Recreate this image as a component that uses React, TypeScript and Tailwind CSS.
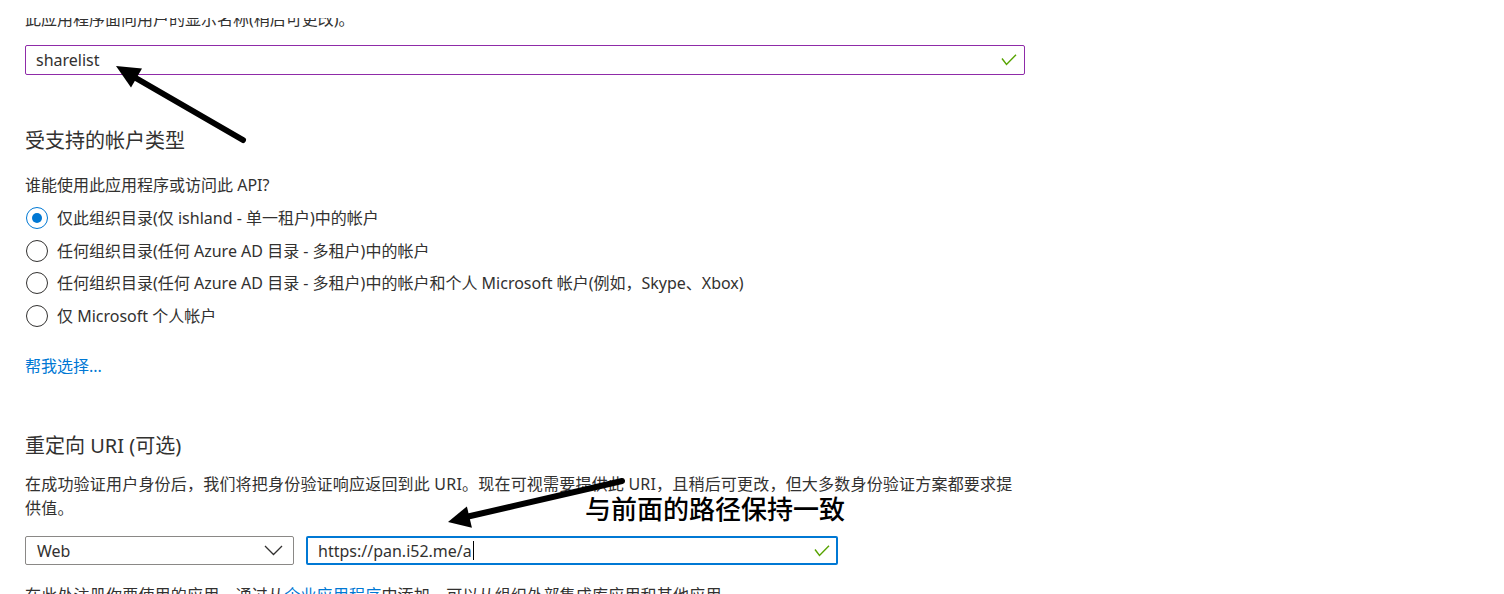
import React from "react";

function Check() {
  return (
    <svg width="16" height="12" viewBox="0 0 16 12" className="shrink-0">
      <path d="M1 4.5 L5.5 10.5 L15 0.8" fill="none" stroke="#57a300" strokeWidth="1.4" />
    </svg>
  );
}

function Radio({ checked, label }: { checked?: boolean; label: string }) {
  return (
    <div className="h-[32.5px] flex items-center">
      <span
        className={`w-[22px] h-[22px] ml-[1px] rounded-full border flex items-center justify-center shrink-0 ${
          checked ? "border-[#0078d4]" : "border-[#323130]"
        }`}
      >
        {checked && <span className="w-[10px] h-[10px] rounded-full bg-[#0078d4]" />}
      </span>
      <span className="ml-[9px] text-[16px] leading-[24px] whitespace-nowrap">{label}</span>
    </div>
  );
}

export default function App() {
  return (
    <div className="relative w-[1504px] h-[594px] overflow-hidden bg-white text-[#323130] font-['Noto_Sans','Noto_Sans_CJK_SC',sans-serif]">
      <div className="absolute top-0 left-0 w-full h-[18px] bg-white z-10" />
      <div className="pl-[25px] pt-[7px] w-[1025px]">
        <p className="text-[16px] leading-[24px] whitespace-nowrap">此应用程序面向用户的显示名称(稍后可更改)。</p>
        <div className="mt-[14px] h-[30px] border border-[#8f2ba8] rounded-[2px] flex items-center pl-[10px] pr-[7px]">
          <span className="flex-1 text-[16px] leading-[24px]">sharelist</span>
          <Check />
        </div>
        <h2 className="mt-[52px] text-[20px] leading-[28px]">受支持的帐户类型</h2>
        <p className="mt-[18px] text-[16px] leading-[24px]">谁能使用此应用程序或访问此 API?</p>
        <div className="mt-[5px] flex flex-col">
          <Radio checked label="仅此组织目录(仅 ishland - 单一租户)中的帐户" />
          <Radio label="任何组织目录(任何 Azure AD 目录 - 多租户)中的帐户" />
          <Radio label="任何组织目录(任何 Azure AD 目录 - 多租户)中的帐户和个人 Microsoft 帐户(例如，Skype、Xbox)" />
          <Radio label="仅 Microsoft 个人帐户" />
        </div>
        <a className="block mt-[22px] text-[16px] leading-[24px] text-[#0078d4]">帮我选择...</a>
        <h2 className="mt-[54px] text-[20px] leading-[28px]">重定向 URI (可选)</h2>
        <p className="mt-[12px] text-[16px] leading-[24px] whitespace-nowrap tracking-[0.2px]">
          在成功验证用户身份后，我们将把身份验证响应返回到此 URI。现在可视需要提供此 URI，且稍后可更改，但大多数身份验证方案都要求提
          <br />
          供值。
        </p>
        <div className="mt-[16px] flex gap-[12px]">
          <div className="w-[269px] h-[29px] border border-[#8a8886] rounded-[2px] flex items-center pl-[11px] pr-[10px]">
            <span className="flex-1 text-[16px] leading-[24px]">Web</span>
            <svg width="19" height="11" viewBox="0 0 19 11">
              <path d="M1 1 L9.5 9.5 L18 1" fill="none" stroke="#323130" strokeWidth="1.3" />
            </svg>
          </div>
          <div className="w-[532px] h-[29px] border-2 border-[#0078d4] rounded-[2px] flex items-center pl-[10px] pr-[6px]">
            <span className="flex-1 flex items-center text-[16px] leading-[24px]">
              https://pan.i52.me/a
              <span className="ml-[1px] w-[1px] h-[19px] bg-black" />
            </span>
            <Check />
          </div>
        </div>
        <p className="mt-[18px] text-[16px] leading-[24px] whitespace-nowrap tracking-[0.2px]">
          在此处注册你要使用的应用，通过从<span className="text-[#0078d4]">企业应用程序</span>中添加，可以从组织外部集成库应用和其他应用。
        </p>
      </div>

      <svg className="absolute inset-0 pointer-events-none z-20" width="1504" height="594" viewBox="0 0 1504 594">
        <line x1="243" y1="140" x2="134" y2="77" stroke="#000" strokeWidth="6" strokeLinecap="round" />
        <polygon points="116,66 142,68.6 131,87.6" fill="#000" />
        <line x1="622" y1="481" x2="466" y2="517" stroke="#000" strokeWidth="6" strokeLinecap="round" />
        <polygon points="448,522 471.9,527.8 466.9,506.4" fill="#000" />
      </svg>
      <div className="absolute left-[585px] top-[494px] z-20 text-[26px] leading-[28px] font-medium text-black whitespace-nowrap font-['Noto_Sans_CJK_SC',sans-serif]">
        与前面的路径保持一致
      </div>
    </div>
  );
}
